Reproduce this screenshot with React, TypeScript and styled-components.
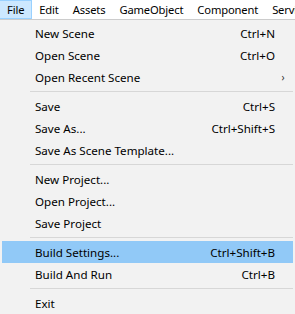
import React from "react";
import styled, { createGlobalStyle } from "styled-components";

const GlobalStyle = createGlobalStyle`
  html, body {
    margin: 0;
    padding: 0;
    background: #ffffff;
  }
  body {
    font-family: "Noto Sans", "Open Sans", sans-serif;
    font-size: 11.6px;
    color: #000000;
  }
`;

const Window = styled.div`
  width: 295px;
  height: 314px;
  overflow: hidden;
  display: flex;
  flex-direction: column;
`;

const MenuBar = styled.div`
  display: flex;
  height: 19px;
  background: #ffffff;
  border-bottom: 1px solid #cccccc;
  white-space: nowrap;
  overflow: hidden;
`;

const MenuBarItem = styled.div<{ $active?: boolean }>`
  display: flex;
  align-items: center;
  padding: 0 7px;
  box-sizing: border-box;
  height: 19px;
  font-size: 11.2px;
  letter-spacing: -0.15px;
  background: ${(p) => (p.$active ? "#cce8ff" : "transparent")};
  border: 1px solid ${(p) => (p.$active ? "#99d1ff" : "transparent")};
  border-left: none;
  border-right: ${(p) => (p.$active ? "1px solid #99d1ff" : "none")};
`;

const Dropdown = styled.div`
  flex: 1;
  background: #f2f2f2;
  padding: 2px 2px 0;
`;

const Row = styled.div<{ $highlight?: boolean }>`
  display: grid;
  grid-template-columns: 1fr auto 18px;
  align-items: center;
  height: 22px;
  padding-left: 33px;
  background: ${(p) => (p.$highlight ? "#91c9f7" : "transparent")};
  white-space: nowrap;
`;

const Shortcut = styled.span`
  text-align: right;
`;

const Arrow = styled.span`
  text-align: center;
  font-size: 10px;
  padding-right: 2px;
  color: #333333;
`;

const Separator = styled.div`
  padding: 3px 0 3px 28px;
  &::after {
    content: "";
    display: block;
    height: 1px;
    background: #d7d7d7;
  }
`;

type Item = { label: string; shortcut?: string; submenu?: boolean; highlight?: boolean } | "sep";

const items: Item[] = [
  { label: "New Scene", shortcut: "Ctrl+N" },
  { label: "Open Scene", shortcut: "Ctrl+O" },
  { label: "Open Recent Scene", submenu: true },
  "sep",
  { label: "Save", shortcut: "Ctrl+S" },
  { label: "Save As...", shortcut: "Ctrl+Shift+S" },
  { label: "Save As Scene Template..." },
  "sep",
  { label: "New Project..." },
  { label: "Open Project..." },
  { label: "Save Project" },
  "sep",
  { label: "Build Settings...", shortcut: "Ctrl+Shift+B", highlight: true },
  { label: "Build And Run", shortcut: "Ctrl+B" },
  "sep",
  { label: "Exit" },
];

const topMenus = ["File", "Edit", "Assets", "GameObject", "Component", "Services"];

const App = () => {
  return (
    <Window>
      <GlobalStyle />
      <MenuBar>
        {topMenus.map((m, i) => (
          <MenuBarItem key={m} $active={i === 0}>
            {m}
          </MenuBarItem>
        ))}
      </MenuBar>
      <Dropdown>
        {items.map((item, i) =>
          item === "sep" ? (
            <Separator key={i} />
          ) : (
            <Row key={i} $highlight={item.highlight}>
              <span>{item.label}</span>
              <Shortcut>{item.shortcut}</Shortcut>
              <Arrow>{item.submenu ? "›" : ""}</Arrow>
            </Row>
          )
        )}
      </Dropdown>
    </Window>
  );
};

export default App;
